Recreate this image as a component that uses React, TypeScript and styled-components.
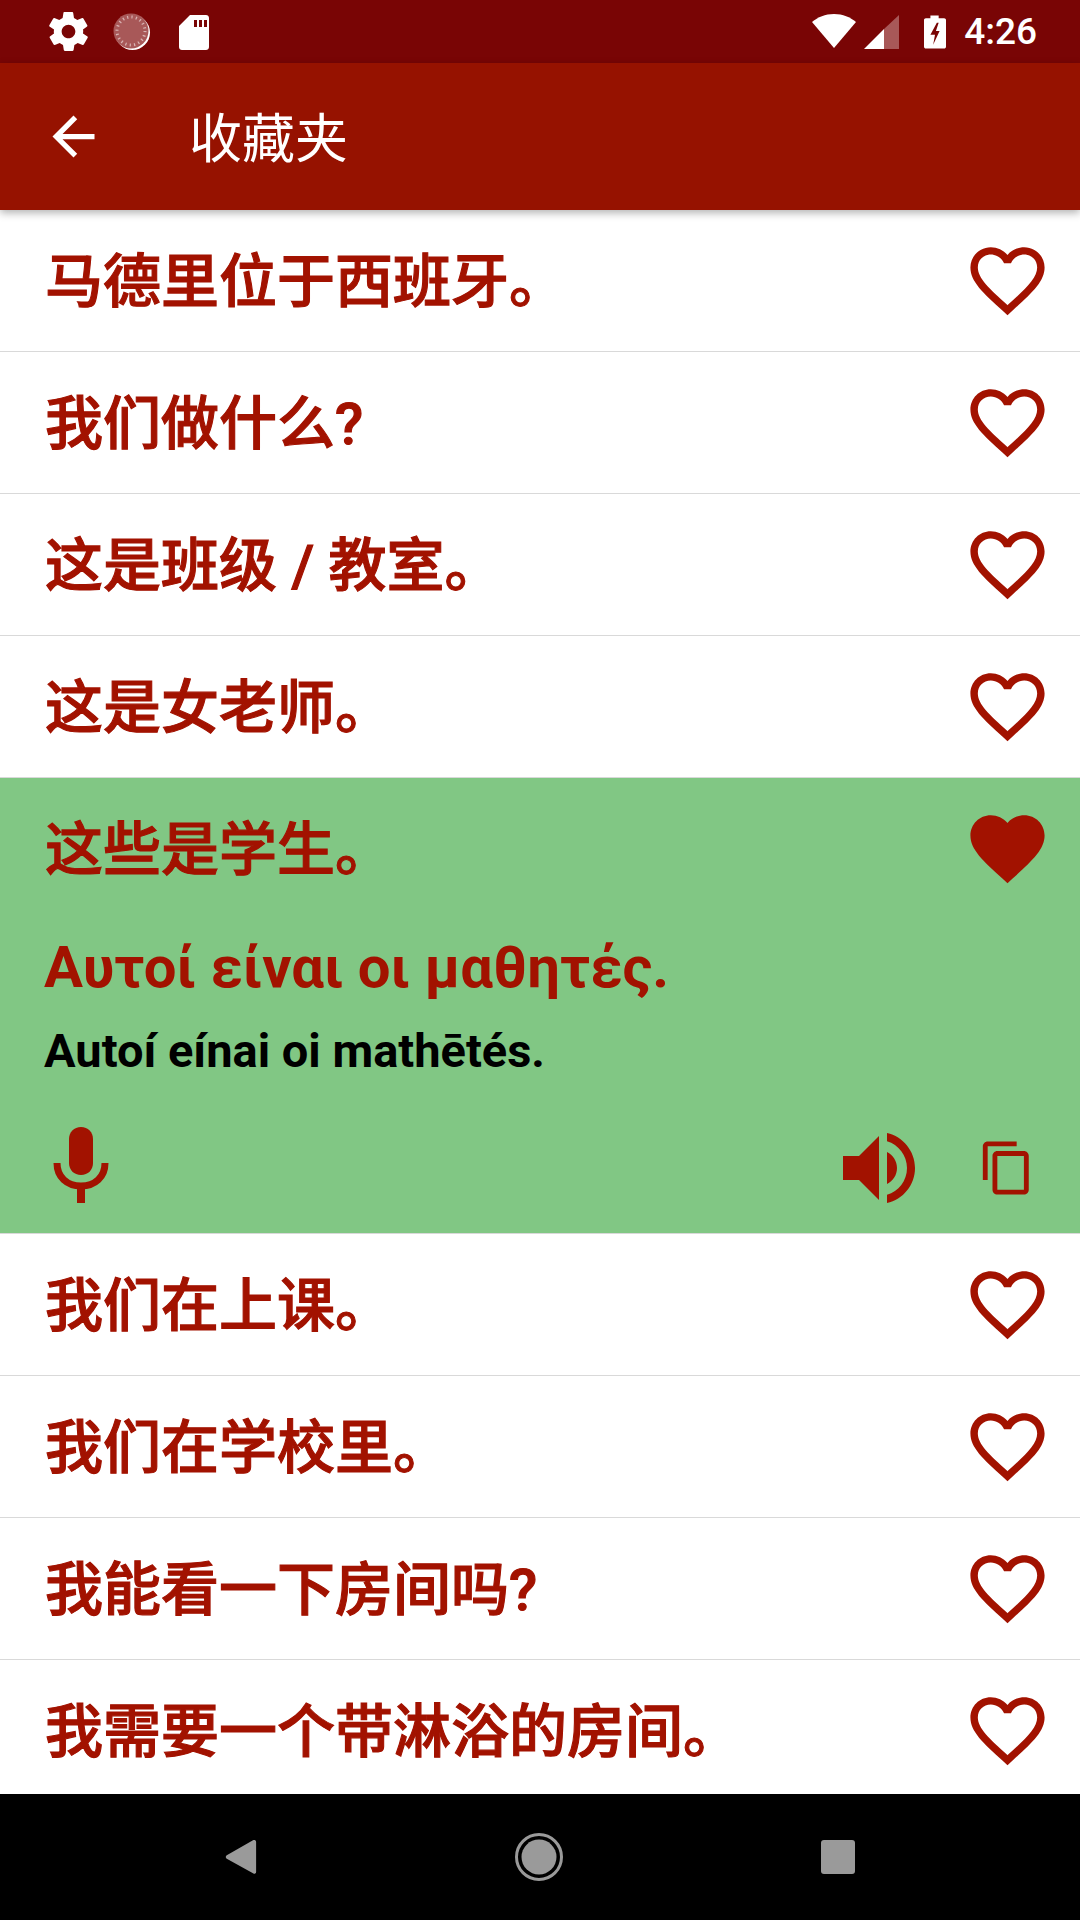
import React from 'react';
import styled, { createGlobalStyle } from 'styled-components';

const RED = '#a21200';

const GlobalStyle = createGlobalStyle`
  html, body { margin: 0; padding: 0; background: #fff; }
  body { font-family: Roboto, "Noto Sans CJK SC", sans-serif; }
`;

const phrases = [
  { text: '马德里位于西班牙。' },
  { text: '我们做什么?' },
  { text: '这是班级 / 教室。' },
  { text: '这是女老师。' },
  {
    text: '这些是学生。',
    open: true,
    greek: 'Αυτοί είναι οι μαθητές.',
    latin: 'Autoí eínai oi mathētés.',
  },
  { text: '我们在上课。' },
  { text: '我们在学校里。' },
  { text: '我能看一下房间吗?' },
  { text: '我需要一个带淋浴的房间。' },
];

const HEART_OUTLINE = 'M16.5 3c-1.74 0-3.41.81-4.5 2.09C10.91 3.81 9.24 3 7.5 3 4.42 3 2 5.42 2 8.5c0 3.78 3.4 6.86 8.55 11.54L12 21.35l1.45-1.32C18.6 15.36 22 12.28 22 8.5 22 5.42 19.58 3 16.5 3zm-4.4 15.55l-.1.1-.1-.1C7.14 14.24 4 11.39 4 8.5 4 6.5 5.5 5 7.5 5c1.54 0 3.04.99 3.57 2.36h1.87C13.46 5.99 14.96 5 16.5 5c2 0 3.5 1.5 3.5 3.5 0 2.89-3.14 5.74-7.9 10.05z';
const HEART_FILLED = 'M12 21.35l-1.45-1.32C5.4 15.36 2 12.28 2 8.5 2 5.42 4.42 3 7.5 3c1.74 0 3.41.81 4.5 2.09C13.09 3.81 14.76 3 16.5 3 19.58 3 22 5.42 22 8.5c0 3.78-3.4 6.86-8.55 11.54L12 21.35z';

function Heart({ filled }: { filled?: boolean }) {
  return (
    <HeartSvg viewBox="0 0 24 24">
      <path d={filled ? HEART_FILLED : HEART_OUTLINE} fill={RED} />
    </HeartSvg>
  );
}

export default function App() {
  return (
    <>
      <GlobalStyle />
      <Screen>
        <StatusBar>
          <StatusLeft>
            <svg width="47" height="47" viewBox="0 0 24 24" fill="#fff">
              <path d="M19.4 13c0-.3.1-.6.1-1s0-.7-.1-1l2.1-1.6c.2-.2.2-.4.1-.6l-2-3.5c-.1-.2-.4-.3-.6-.2l-2.5 1c-.5-.4-1.1-.7-1.7-1l-.4-2.6c0-.2-.2-.4-.5-.4h-4c-.2 0-.5.2-.5.4l-.4 2.6c-.6.3-1.2.6-1.7 1l-2.5-1c-.2-.1-.5 0-.6.2l-2 3.5c-.1.2-.1.5.1.6L4.6 11c0 .3-.1.7-.1 1s0 .7.1 1l-2.1 1.6c-.2.2-.2.4-.1.6l2 3.5c.1.2.4.3.6.2l2.5-1c.5.4 1.1.7 1.7 1l.4 2.6c0 .2.3.4.5.4h4c.3 0 .5-.2.5-.4l.4-2.6c.6-.3 1.2-.6 1.7-1l2.5 1c.2.1.5 0 .6-.2l2-3.5c.1-.2.1-.4-.1-.6L19.4 13zM12 15.5c-1.9 0-3.5-1.6-3.5-3.5s1.6-3.5 3.5-3.5 3.5 1.6 3.5 3.5-1.6 3.5-3.5 3.5z" />
            </svg>
            <svg width="40" height="40" viewBox="0 0 40 40">
              <circle cx="20.5" cy="20.5" r="17.5" fill="#fff" />
              <circle cx="19" cy="19" r="17.5" fill="#a85858" />
              <circle cx="19" cy="19" r="14" fill="none" stroke="#d9b4b4" strokeWidth="3" strokeDasharray="1.2 3.2" />
            </svg>
            <svg width="40" height="40" viewBox="0 0 40 40" fill="#fff">
              <path d="M18 3h16c1.6 0 3 1.3 3 3v29c0 1.7-1.4 3-3 3H10c-1.6 0-3-1.3-3-3V14L18 3zM22 8v7h3V8h-3zm5 0v7h3V8h-3zm5 0v7h3V8h-3z" fillRule="evenodd" />
            </svg>
          </StatusLeft>
          <StatusRight>
            <svg width="48" height="40" viewBox="0 0 48 40" fill="#fff">
              <path d="M24 36 2 10C8 5 15 2 24 2s16 3 22 8L24 36z" />
            </svg>
            <svg width="38" height="40" viewBox="0 0 38 40">
              <path d="M1 37 21 17v20H1z" fill="#fff" />
              <path d="M21 17 36 3v34H21V17z" fill="#a85858" />
            </svg>
            <BatteryIcon width="22" height="40" viewBox="0 0 24 40" fill="#fff">
              <path fillRule="evenodd" d="M7 2h9v3h6c1 0 2 .8 2 2v29c0 1-1 2-2 2H2c-1 0-2-1-2-2V7c0-1.2 1-2 2-2h5V2zM14 10 7 23h5l-2 11 7-15h-4l3-9h-2z" />
            </BatteryIcon>
            <Clock>4:26</Clock>
          </StatusRight>
        </StatusBar>
        <AppBar>
          <svg width="63" height="63" viewBox="0 0 24 24" fill="#fff">
            <path d="M20 11H7.83l5.59-5.59L12 4l-8 8 8 8 1.41-1.41L7.83 13H20v-2z" />
          </svg>
          <Title>收藏夹</Title>
        </AppBar>
        <List>
          {phrases.map((p) => (
            <Row key={p.text} $open={p.open}>
              <RowTop>
                <Phrase>{p.text}</Phrase>
                <Heart filled={p.open} />
              </RowTop>
              {p.open && (
                <>
                  <Greek>{p.greek}</Greek>
                  <Latin>{p.latin}</Latin>
                  <Actions>
                    <svg width="72" height="86" viewBox="0 0 72 86" fill={RED}>
                      <path d="M36 2c-7 0-12 5-12 12v24c0 7 5 12 12 12s12-5 12-12V14c0-7-5-12-12-12z" />
                      <path d="M12 38c0 14 10 23 24 23s24-9 24-23" fill="none" stroke={RED} strokeWidth="7" />
                      <path d="M32 60h8v18h-8z" />
                    </svg>
                    <ActionsRight>
                      <svg width="96" height="96" viewBox="0 0 24 24" fill={RED}>
                        <path d="M3 9v6h4l5 5V4L7 9H3zm13.5 3c0-1.77-1.02-3.29-2.5-4.03v8.05c1.48-.73 2.5-2.25 2.5-4.02zM14 3.23v2.06c2.89.86 5 3.54 5 6.71s-2.11 5.85-5 6.71v2.06c4.01-.91 7-4.49 7-8.77s-2.99-7.86-7-8.77z" />
                      </svg>
                      <svg width="58" height="58" viewBox="0 0 24 24" fill={RED}>
                        <path d="M16 1H4c-1.1 0-2 .9-2 2v14h2V3h12V1zm3 4H8c-1.1 0-2 .9-2 2v14c0 1.1.9 2 2 2h11c1.1 0 2-.9 2-2V7c0-1.1-.9-2-2-2zm0 16H8V7h11v14z" />
                      </svg>
                    </ActionsRight>
                  </Actions>
                </>
              )}
            </Row>
          ))}
        </List>
        <NavBar>
          <svg width="32" height="36" viewBox="0 0 36 40" fill="#9a9a9a">
            <path d="M33 1c1 0 2 .8 2 2v34c0 1.4-1.5 2.4-3 1.5L2 22c-1.5-1-1.5-3 0-4L31 1.5c.6-.4 1.3-.5 2-.5z" />
          </svg>
          <svg width="48" height="48" viewBox="0 0 48 48">
            <circle cx="24" cy="24" r="22.5" fill="none" stroke="#9a9a9a" strokeWidth="3" />
            <circle cx="24" cy="24" r="17.5" fill="#9a9a9a" />
          </svg>
          <Recents />
        </NavBar>
      </Screen>
    </>
  );
}

const Screen = styled.div`
  width: 1080px;
  height: 1920px;
  display: flex;
  flex-direction: column;
  overflow: hidden;
  background: #fff;
`;

const StatusBar = styled.div`
  height: 63px;
  flex: none;
  display: flex;
  justify-content: space-between;
  align-items: center;
  padding: 0 43px 0 45px;
  background: #790505;
`;

const StatusLeft = styled.div`
  display: flex;
  align-items: center;
  gap: 20px;
`;

const StatusRight = styled.div`
  display: flex;
  align-items: center;
  gap: 5px;
`;

const BatteryIcon = styled.svg`
  margin-left: 18px;
`;

const Clock = styled.span`
  margin-left: 13px;
  font-size: 37px;
  font-weight: 500;
  color: #fff;
`;

const AppBar = styled.div`
  height: 147px;
  flex: none;
  position: relative;
  z-index: 1;
  display: flex;
  align-items: center;
  padding-left: 42px;
  gap: 84px;
  background: #961200;
  box-shadow: 0 3px 8px rgba(0, 0, 0, 0.3);
`;

const Title = styled.h1`
  margin: 0 0 4px;
  font-family: "Noto Sans CJK SC", sans-serif;
  font-size: 53px;
  font-weight: 400;
  color: #fff;
`;

const List = styled.div`
  flex: 1;
  overflow: hidden;
`;

const Row = styled.div<{ $open?: boolean }>`
  box-sizing: border-box;
  height: ${(p) => (p.$open ? '456px' : '142px')};
  padding: 0 28px 0 45px;
  background: ${(p) => (p.$open ? '#81c784' : '#fff')};
  border-bottom: 1px solid #d9d9d9;
`;

const RowTop = styled.div`
  height: 141px;
  display: flex;
  justify-content: space-between;
  align-items: center;
`;

const Phrase = styled.div`
  padding-bottom: 8px;
  font-family: Roboto, "Noto Sans CJK SC", sans-serif;
  font-size: 58px;
  font-weight: 500;
  color: ${RED};
  -webkit-text-stroke: 1.1px ${RED};
`;

const HeartSvg = styled.svg`
  width: 89px;
  height: 89px;
  flex: none;
`;

const Greek = styled.div`
  margin: 14px 0 0 -1px;
  font-size: 58px;
  line-height: 68px;
  font-weight: 700;
  color: ${RED};
`;

const Latin = styled.div`
  margin: 24px 0 0 -1px;
  font-size: 47px;
  line-height: 52px;
  font-weight: 700;
  color: #000;
`;

const Actions = styled.div`
  margin-top: 43px;
  display: flex;
  justify-content: space-between;
  align-items: center;
`;

const ActionsRight = styled.div`
  display: flex;
  align-items: center;
  gap: 51px;
  margin-right: 16px;
`;

const NavBar = styled.div`
  height: 126px;
  flex: none;
  display: flex;
  justify-content: space-between;
  align-items: center;
  padding: 0 225px;
  background: #000;
`;

const Recents = styled.div`
  width: 34px;
  height: 34px;
  border-radius: 3px;
  background: #9a9a9a;
`;
